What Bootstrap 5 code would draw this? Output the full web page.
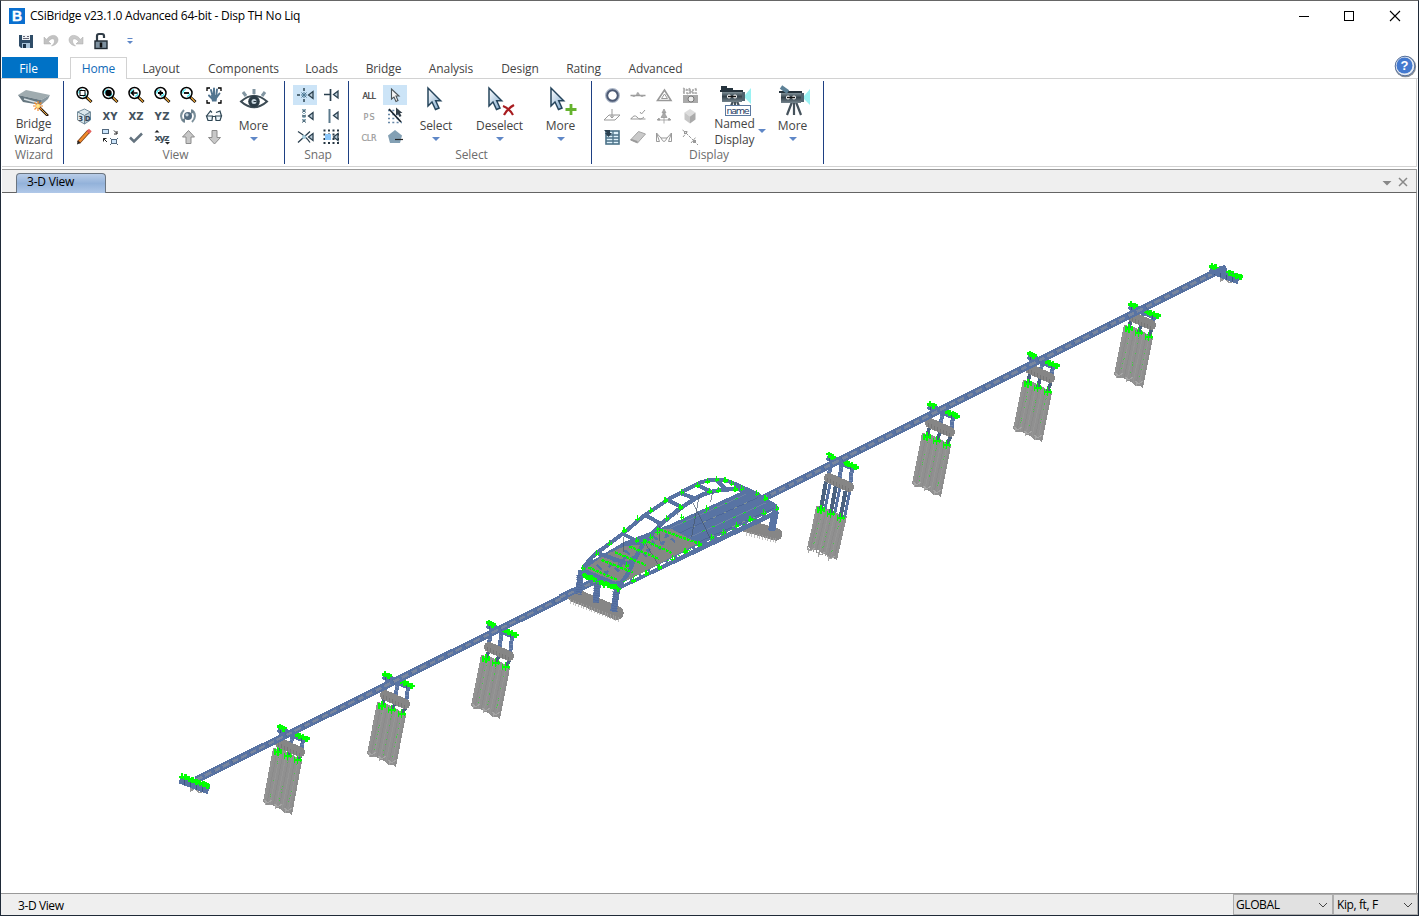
<!DOCTYPE html>
<html lang="en">
<head>
<meta charset="utf-8">
<title>CSiBridge</title>
<link href="https://cdn.jsdelivr.net/npm/bootstrap@5.3.0/dist/css/bootstrap.min.css" rel="stylesheet">
<style>
  html,body{height:100%}
  body{font-family:"Open Sans","Noto Sans",sans-serif;font-size:12px;line-height:16px;color:#444;background:#fff;overflow:hidden;letter-spacing:-.1px}
  .win{height:916px;border:1px solid #1f2a38;border-top-color:#666}
  .titlebar{height:30px;color:#000;padding-left:8px;letter-spacing:-.24px}
  .winbtn{width:45px}
  .quick{height:26px;padding:0 0 7px 15px;gap:5px}
  .tabrow{height:22px;padding-left:1px;border-bottom:1px solid #d2d2d2}
  .tabrow .rtab{text-align:center;padding-top:4px;height:22px;margin-bottom:-1px;line-height:16px}
  .rtab:nth-child(1){width:56px;background:#0072c6;color:#fff;margin-right:12px;height:21px!important;margin-bottom:0!important;padding-right:3px}
  .rtab:nth-child(2){width:57px;background:#fff;border:1px solid #d2d2d2;border-bottom:0;color:#0f6ab8;padding-top:3px!important}
  .rtab:nth-child(3){width:68px}.rtab:nth-child(4){width:97px}.rtab:nth-child(5){width:59px}
  .rtab:nth-child(6){width:65px}.rtab:nth-child(7){width:70px}.rtab:nth-child(8){width:68px}
  .rtab:nth-child(9){width:59px}.rtab:nth-child(10){width:85px}
  .ribbon{height:88px;margin:0 1px 0 1px;border:solid #d2d2d2;border-width:0 1px 1px 0}
  .rgroup{position:relative;height:87px;padding:5px 0 0 7px;margin-right:1px}
  .rgroup::after{content:"";position:absolute;right:-1px;top:2px;width:1px;height:83px;background:#1e4083}
  .rbody{height:63px}
  .glabel{color:#6d6d6d;text-align:center;line-height:16px;margin-left:-4px}
  .icos{display:grid;grid-template-rows:21px 21px 21px;grid-auto-columns:26px;grid-auto-flow:column;align-content:start}
  .icos>span{display:flex;align-items:center;justify-content:center}
  .icos svg{width:20px;height:20px}
  .hot{background:#cce4f7;margin:1px 1px 0;}
  .big{position:relative;display:flex;flex-direction:column;align-items:center;line-height:16px;left:.5px}
  .big>svg{width:32px;height:32px;margin-bottom:2px;flex:none}
  .big.two>svg{margin-bottom:0}
  .big.two{text-align:center}
  .caret{width:0;height:0;border:4px solid transparent;border-top-color:#5f87c7;border-bottom:0;margin-top:3px}
  .caret.side{position:absolute;right:0;top:42px}
  .docbar{height:24px;margin:2px 1px 0;background:#efefef;border:solid #999;border-width:1px 1px 1px 0;border-bottom-color:#646464;padding-left:14px}
  .doctab{width:90px;height:20px;margin-top:3px;border:1px solid #6b7580;border-bottom:0;border-radius:4px 4px 0 0;background:linear-gradient(#b9cde8,#93b2da 50%,#b0c8e8);color:#000;padding-left:10px;line-height:16px;letter-spacing:-.2px}
  .canvas{height:700px;margin:0 1px;border-right:1px solid #999}
  .status{height:22px;background:#efefef;border-top:1px solid #999;color:#000;padding-left:17px;letter-spacing:-.4px}
  .combo{height:21px;background:#e1e1e1;border:1px solid #adadad;padding:0 4px 0 2px;color:#000}
  .t{font-family:"DejaVu Sans","Liberation Sans",sans-serif;letter-spacing:0}
</style>
</head>
<body>
<svg width="0" height="0" class="position-absolute">
  <defs>
    <g id="lens"><path d="M11.500 11.500L17.500 17" stroke="#000" stroke-width="3"/><path d="M13 12.500L17 16.700" stroke="#e9a33a" stroke-width="1.400"/><circle cx="8.500" cy="8" r="5.500" fill="#fff" stroke="#000" stroke-width="1.500"/><path d="M4.800 8.500a4 4 0 0 1 3-4M12 8.500a4 4 0 0 1-3 3" fill="none" stroke="#31e2ee" stroke-width="1.200"/></g>
    <linearGradient id="arr" x1="0" y1="0" x2="1" y2="1"><stop offset="0" stop-color="#fff"/><stop offset="1" stop-color="#7fa9cd"/></linearGradient>
    <linearGradient id="metal" x1="0" y1="0" x2="0" y2="1"><stop offset="0" stop-color="#8fa0a8"/><stop offset=".5" stop-color="#35434c"/><stop offset="1" stop-color="#74838c"/></linearGradient>
    <path id="cur" d="M9 4v18l4-4 3.500 7.500 3.500-1.500-3.300-7.300h5z" fill="url(#arr)" stroke="#26455c" stroke-width="1.500"/>
    <path id="eyeS" d="M17 6.500v7l-4.500-3.500z" fill="#b9cbd8" stroke="#2b404f" stroke-width="1.300"/>
    <g id="cam"><path d="M15 20l-5 13M17 20v13M19 20l5 13" stroke="#45525c" stroke-width="2.200"/><rect x="4" y="10" width="20" height="11" fill="url(#metal)"/><path d="M2 10h23" stroke="#26333c" stroke-width="2"/><circle cx="11" cy="15.500" r="2" fill="#fff"/><circle cx="17" cy="15.500" r="2" fill="#fff"/><path d="M10 15.500h8" stroke="#111" stroke-width="1.500"/><rect x="24" y="11" width="3" height="9" fill="#4f636f"/><path d="M27 14l6-7v16l-6-6z" fill="#9af2f3"/></g>
  </defs>
</svg>
<div class="win d-flex flex-column">
  <div class="titlebar d-flex align-items-center">
    <svg width="16" height="16" viewBox="0 0 16 16" class="me-1"><rect width="16" height="16" fill="#0a6fcf"/><text x="3" y="13" font-family="Liberation Sans" font-weight="700" font-size="14" fill="#fff" stroke="#fff" stroke-width=".4">B</text></svg>
    <span style="padding-left:1px">CSiBridge v23.1.0 Advanced 64-bit - Disp TH No Liq</span>
    <div class="ms-auto d-flex" style="padding-right:1px">
      <svg class="winbtn" height="16"><path d="M17 8.500h10" stroke="#000"/></svg>
      <svg class="winbtn" height="16"><rect x="17.500" y="3.500" width="9" height="9" fill="none" stroke="#000"/></svg>
      <svg class="winbtn" height="16"><path d="M18 3l10 10M28 3L18 13" stroke="#000" stroke-width="1.100"/></svg>
    </div>
  </div>
  <div class="quick d-flex align-items-center">
    <svg width="20" height="20" viewBox="0 0 20 20"><path d="M3 4h14v13H5l-2-2z" fill="#2f4d68"/><rect x="6" y="4" width="8" height="5" fill="#f0f3f5"/><path d="M7 5.500h2m2 0h2M7 7.500h6" stroke="#667"/><rect x="6" y="12" width="8" height="5" fill="#a9c4da"/><rect x="7" y="13" width="3" height="4" fill="#1d3347"/></svg>
    <svg width="20" height="20" viewBox="0 0 20 20"><path d="M3 6v7h7l-2.500-2.500C10 7 13.500 7 13.500 10c0 2-1 3-3 5 5-1 6.500-4 6.500-6.500C16.500 3 9 3 5.500 8.500z" fill="#c2c2c2" stroke="#aaa" stroke-width=".5"/></svg>
    <svg width="20" height="20" viewBox="0 0 20 20"><path d="M17 6v7h-7l2.500-2.500C10 7 6.500 7 6.500 10c0 2 1 3 3 5-5-1-6.500-4-6.500-6.500C3.500 3 11 3 14.500 8.500z" fill="#c9c9c9" stroke="#aaa" stroke-width=".5"/></svg>
    <svg width="20" height="20" viewBox="0 0 20 20"><path d="M6 10V5q0-2 2-2h3q2 0 2 2v2" fill="none" stroke="#303c46" stroke-width="2.200"/><rect x="4" y="10" width="12" height="7.500" fill="#7d909f" stroke="#202a33" stroke-width="1.400"/><path d="M10 11.500v5" stroke="#111" stroke-width="2.500"/></svg>
    <svg width="20" height="20" viewBox="0 0 20 20" style="margin-left:4px"><path d="M7.500 7.500h5" stroke="#5f87c7"/><path d="M7 10h6l-3 3z" fill="#5f87c7"/></svg>
  </div>
  <div class="tabrow d-flex align-items-end position-relative">
    <div class="rtab">File</div><div class="rtab">Home</div><div class="rtab">Layout</div><div class="rtab">Components</div><div class="rtab">Loads</div><div class="rtab">Bridge</div><div class="rtab">Analysis</div><div class="rtab">Design</div><div class="rtab">Rating</div><div class="rtab">Advanced</div>
    <svg width="24" height="24" viewBox="0 0 24 24" class="ms-auto align-self-start" style="margin:-3px 1px 0 0;flex:none"><circle cx="12.500" cy="12.700" r="10.600" fill="#8b9096"/><circle cx="12" cy="12" r="9.800" fill="#e6ebf2" stroke="#5571a0"/><circle cx="11.500" cy="11.500" r="8" fill="#4379cf"/><text x="7.500" y="16" font-family="Liberation Sans" font-weight="700" font-size="13" fill="#fff">?</text></svg>
  </div>
  <div class="ribbon d-flex">
    <div class="rgroup" style="width:61px">
      <div class="rbody"><div class="big two" style="margin-left:-6px"><svg viewBox="0 0 32 32"><path d="M0 11L8 6l24 5-9 5z" fill="#a0acb0"/><path d="M0 11l23 5v5L5 18z" fill="#667780"/><path d="M32 11l-9 5v5l7-6z" fill="#87969e"/><path d="M6 15l14 4" stroke="#d8e1e5" stroke-width="1.500"/><path d="M20 22l10 10" stroke="#2b1b12" stroke-width="2.500"/><path d="M21 23l8 8" stroke="#e7ad42"/><path d="M20 17v10M15 22h10M16.500 18.500l7 7M23.500 18.500l-7 7" stroke="#f18a2a" stroke-width="1.200"/><circle cx="20" cy="22" r="2" fill="#ffe889"/></svg><span>Bridge<br>Wizard</span></div></div>
      <div class="glabel">Wizard</div>
    </div>
    <div class="rgroup" style="width:220px">
      <div class="rbody d-flex">
        <div class="icos">
          <span><svg viewBox="0 0 20 20"><use href="#lens"/><rect x="6" y="5.500" width="5" height="5" fill="#fff" stroke="#000"/></svg></span>
          <span><svg viewBox="0 0 20 20"><g fill="#dbe7ec" stroke="#6b8494" stroke-width=".9"><path d="M3.500 6l7-3 6 3-6 3.500z"/><path d="M3.500 6v8l7 4V9.500z"/><path d="M16.500 6v8l-6 4V9.500z" fill="#b9c9d3"/></g><text x="4.300" y="14.500" class="t" font-size="7" font-weight="700" fill="#345">3</text><text x="10.700" y="14.500" class="t" font-size="7" font-weight="700" fill="#345">D</text></svg></span>
          <span><svg viewBox="0 0 20 20"><path d="M4.500 15.500L15 4" stroke="#743a18" stroke-width="4"/><path d="M5.500 14.500L14 5" stroke="#f18b2a" stroke-width="2.600"/><path d="M14 5.500l2.300-2.500" stroke="#e4605c" stroke-width="3.800"/><path d="M3 17.500l.7-3.800L6.500 16z" fill="#222"/></svg></span>
          <span><svg viewBox="0 0 20 20"><use href="#lens"/><circle cx="8.500" cy="8" r="3.200"/></svg></span>
          <span><svg viewBox="0 0 20 20"><text x="2.500" y="13.500" class="t" font-size="10" font-weight="700" fill="#43525e" textLength="15">XY</text></svg></span>
          <span><svg viewBox="0 0 20 20" fill="none" stroke="#536a80"><rect x="2.500" y="2.500" width="6" height="4" fill="#cce5fb"/><rect x="11.500" y="12.500" width="5" height="4" fill="#cce5fb"/><path d="M10 11l1.500 1.500M18 11l-1.500 1.500M10 18l1.500-1.500M18 18l-1.500-1.500"/><path d="M14 3.500l3 3M17 4v3h-3M7 15l-3.500-3.500M3.500 14.500v-3h3" stroke="#222"/></svg></span>
          <span><svg viewBox="0 0 20 20"><use href="#lens"/><path d="M5.500 8h6M8 5.500L5.500 8 8 10.500" fill="none" stroke="#000" stroke-width="1.500"/></svg></span>
          <span><svg viewBox="0 0 20 20"><text x="2.500" y="13.500" class="t" font-size="10" font-weight="700" fill="#43525e" textLength="15">XZ</text></svg></span>
          <span><svg viewBox="0 0 20 20"><path d="M4 10.500L8 14.500 16 6.500" fill="none" stroke="#64737f" stroke-width="2.500"/></svg></span>
          <span><svg viewBox="0 0 20 20"><use href="#lens"/><path d="M6 8h5M8.500 5.500v5" stroke="#000" stroke-width="1.800"/></svg></span>
          <span><svg viewBox="0 0 20 20"><text x="2.500" y="13.500" class="t" font-size="10" font-weight="700" fill="#43525e" textLength="15">YZ</text></svg></span>
          <span><svg viewBox="0 0 20 20"><text x="2.500" y="13.500" class="t" font-size="9.500" font-weight="700" fill="#43525e" textLength="15">xyz</text><path d="M2.500 5.500h5L5 3zM13 15h5l-2.500 2.500z" fill="#222"/></svg></span>
          <span><svg viewBox="0 0 20 20"><use href="#lens"/><path d="M6 8h5" stroke="#000" stroke-width="1.800"/></svg></span>
          <span><svg viewBox="0 0 20 20"><circle cx="10" cy="10" r="4" fill="#526a7e"/><circle cx="9" cy="8.800" r="1.600" fill="#c3d2dc"/><path d="M6 4q-6 6 0 12M14 4q6 6 0 12" fill="none" stroke="#7d919c" stroke-width="2"/><path d="M3 14l4 3V12zM17 6l-4-3v5z" fill="#6e828e"/></svg></span>
          <span><svg viewBox="0 0 20 20"><path d="M10.500 3.500l6 6.500H13v6.500H8V10H4.500z" fill="#c8c8c8" stroke="#8c8c8c"/></svg></span>
          <span><svg viewBox="0 0 20 20"><path d="M3 6V3h3M14 3h3v3M17 15v3h-3M6 18H3v-3" fill="none" stroke="#000" stroke-width="1.300"/><path d="M5 10.500l3 3M7 5l2 7M10 3.500v8M13 4.500l-1 8M15.500 8.500l-3 4" stroke="#527590" stroke-width="2" stroke-linecap="round"/><path d="M7 10h6.500l-1 6.500H8z" fill="#527590"/></svg></span>
          <span><svg viewBox="0 0 20 20" fill="#edf6fb" stroke="#2f4654" stroke-width="1.200"><path d="M2.500 10h6l-.5 4.500H4zM11.500 10h6L16 14.500h-4zM8.500 10.500h3M2.500 10l4-5 1.500 1.500M17.500 10l-1.500-5-4 1.500" /></svg></span>
          <span><svg viewBox="0 0 20 20"><path d="M10.500 17L4.500 10.500H8V3.500h5v7h3.500z" fill="#c8c8c8" stroke="#8c8c8c"/></svg></span>
        </div>
        <div class="big" style="width:52px"><svg viewBox="0 0 32 32"><path d="M3 17.500Q16 6 29 17.500 16 29 3 17.500z" fill="#fff" stroke="#3c4b54" stroke-width="2"/><circle cx="16" cy="17.500" r="5.800" fill="#2b3b45"/><circle cx="16" cy="17.500" r="2.500" fill="#c3d1da"/><path d="M15.500 17.500h3" stroke="#26333c"/><path d="M16 5v5M5 8l3 4M27 8l-3 4" stroke="#8296a2" stroke-width="3"/></svg><span>More</span><i class="caret"></i></div>
      </div>
      <div class="glabel">View</div>
    </div>
    <div class="rgroup" style="width:63px">
      <div class="rbody">
        <div class="icos">
          <span class="hot"><svg viewBox="0 0 20 20"><path d="M2 10h3M9 3v3M9 14v3" stroke="#2d4453" stroke-width="1.500"/><path d="M6.500 7.500l5 5M11.500 7.500l-5 5M9 7v6M6 10h6" stroke="#4c7894"/><use href="#eyeS" x="1"/></svg></span>
          <span><svg viewBox="0 0 20 20"><path d="M9 3v14" stroke="#4989a5" stroke-width="1.200" stroke-dasharray="1 1"/><path d="M7 3.500l4 3M11 3.500L7 6.500M7 9l4 2M11 9l-4 2M7 13.500l4 3M11 13.500l-4 3" stroke="#466576"/><use href="#eyeS" x="1"/></svg></span>
          <span><svg viewBox="0 0 20 20"><path d="M3 4.500q8 5 12 11M3 15.500L15 4.500" fill="none" stroke="#2b404f" stroke-width="1.300"/><circle cx="9" cy="10" r="2" fill="#a8cfdf"/><use href="#eyeS" x="1"/></svg></span>
          <span><svg viewBox="0 0 20 20"><path d="M3 9.500h6M9.500 4v12" stroke="#2b404f" stroke-width="1.700"/><use href="#eyeS" y="-.5"/></svg></span>
          <span><svg viewBox="0 0 20 20"><path d="M8.500 3v14" stroke="#5c7a8d" stroke-width="2"/><use href="#eyeS" y="-.5"/></svg></span>
          <span><svg viewBox="0 0 20 20"><path d="M2.500 3.500h16M2.500 7.500h16M2.500 12h16M2.500 16h16" stroke="#263643" stroke-width="2" stroke-dasharray="2 2.500"/><rect x="4" y="7" width="6" height="6" fill="#8cc7fa"/><use href="#eyeS"/></svg></span>
        </div>
      </div>
      <div class="glabel">Snap</div>
    </div>
    <div class="rgroup" style="width:242px">
      <div class="rbody d-flex">
        <div class="icos">
          <span><svg viewBox="0 0 20 20"><text x="3.500" y="14" class="t" font-size="8" fill="#333" stroke="#333" stroke-width=".2" textLength="13.500">ALL</text></svg></span>
          <span><svg viewBox="0 0 20 20"><text x="4.500" y="14" class="t" font-size="8" fill="#999" stroke="#999" stroke-width=".2" textLength="11">PS</text></svg></span>
          <span><svg viewBox="0 0 20 20"><text x="2.500" y="14" class="t" font-size="8" fill="#999" stroke="#999" stroke-width=".2" textLength="15">CLR</text></svg></span>
          <span class="hot"><svg viewBox="0 0 20 20"><path d="M6.500 4v10l2.500-2 2 4.500 2-1-2-4.500H14z" fill="#f5f5f5" stroke="#4b5459" stroke-width="1.100"/></svg></span>
          <span><svg viewBox="0 0 20 20"><path d="M3 4.500h12M3 8.500h13M3 12.500h13M3 16.500h14" stroke="#6788a8" stroke-width="1.700" stroke-dasharray="2 2.300"/><path d="M4 3l12 13" stroke="#14212c" stroke-width="1.700"/><path d="M11 1.500v8l2-1.500 1.500 3 2-1-1.500-3h2.500z" fill="#333f48"/></svg></span>
          <span><svg viewBox="0 0 20 20"><path d="M10 3l7 5.500L15 16H5L3 8.500z" fill="#83a0b4"/><path d="M10 12.500h8" stroke="#222" stroke-width="1.200"/></svg></span>
        </div>
        <div class="big" style="width:55px"><svg viewBox="0 0 32 32"><use href="#cur" x="-1"/></svg><span>Select</span><i class="caret"></i></div>
        <div class="big" style="width:72px"><svg viewBox="0 0 32 32"><use href="#cur" x="-4"/><path d="M19 22q6 2 10 9M30 21q-7 4-10 10" fill="none" stroke="#a81c20" stroke-width="2.200"/></svg><span>Deselect</span><i class="caret"></i></div>
        <div class="big" style="width:50px"><svg viewBox="0 0 32 32"><use href="#cur" x="-3"/><path d="M26 20v11M20.500 25.500h11" stroke="#65b32e" stroke-width="2.800"/></svg><span>More</span><i class="caret"></i></div>
      </div>
      <div class="glabel">Select</div>
    </div>
    <div class="rgroup" style="width:231px">
      <div class="rbody d-flex">
        <div class="icos">
          <span><svg viewBox="0 0 20 20"><circle cx="10.500" cy="10.500" r="6" fill="none" stroke="#aeb9c9" stroke-width="3"/><circle cx="10.500" cy="10.500" r="5.300" fill="none" stroke="#4d5a74" stroke-width="2"/></svg></span>
          <span><svg viewBox="0 0 20 20" fill="none" stroke="#999"><path d="M2 14l5-5h11l-5 5zM10 3v9M8 9.500l2 2.500 2-2.500"/></svg></span>
          <span><svg viewBox="0 0 20 20"><rect x="4" y="4" width="13" height="13" fill="#dff2fc" stroke="#4c7288" stroke-width="1.600"/><path d="M11 4v13M4 8h13M4 11h13M4 14h13" stroke="#4c7288" stroke-width="1.300"/><path d="M2 3h6v3h2L6.500 10 3 6h2z" fill="#2b4050"/></svg></span>
          <span><svg viewBox="0 0 20 20"><path d="M2.500 10.500h15" stroke="#999" stroke-width="1.500"/><path d="M4 10.500q1.500 3 4 0zM8 10q1.500-6 4 0zM12 10.500q2 3 4 0z" fill="#aaa"/></svg></span>
          <span><svg viewBox="0 0 20 20" fill="none" stroke="#999"><path d="M2.500 13h15M3 13q3-5 6-2 3 4 7 0M12 6l1.500 2L17 4"/></svg></span>
          <span><svg viewBox="0 0 20 20"><path d="M2.500 13l8-8.500 7 2.500-8 9z" fill="#cacaca" stroke="#a5a5a5"/><path d="M2.500 13l7 3v-2l-6-2z" fill="#999"/></svg></span>
          <span><svg viewBox="0 0 20 20" fill="none" stroke="#999"><path d="M3.500 15.500L10.500 5l6.500 10.500z" stroke-width="1.600"/><path d="M7.500 13.500l3-4.500 3 4.500z"/></svg></span>
          <span><svg viewBox="0 0 20 20" fill="#aaa" stroke="#999" stroke-width=".8"><path d="M10 3l2 4H8zM10 6.500l3 5H7zM10 11v6.500M3 14h3l-1-2zM17 14h-3l1-2zM4 14h12"/></svg></span>
          <span><svg viewBox="0 0 20 20" fill="none" stroke="#999"><path d="M2.500 6v8.500h3L2.500 6l4.500 5h6l4.500-5v8.500h-3l3-8.500M7 11q3 7 6 0" /></svg></span>
          <span><svg viewBox="0 0 20 20"><path d="M3 3l14 6M3 7l8-4M7 9l10-6M3 5h14M3 8h14" stroke="#aaa" stroke-width="1.300" stroke-dasharray="2 1"/><rect x="3" y="10" width="15" height="8" fill="#aaa"/><circle cx="11" cy="14" r="3" fill="#eee" stroke="#777"/></svg></span>
          <span><svg viewBox="0 0 20 20"><path d="M10 3l5.500 3.500-5.500 4-5.500-4z" fill="#ddd"/><path d="M4.500 6.500l5.500 4v7l-5.500-4z" fill="#c7c7c7"/><path d="M15.500 6.500l-5.500 4v7l5.500-4z" fill="#aaa"/></svg></span>
          <span><svg viewBox="0 0 20 20" fill="none" stroke="#999"><path d="M6 6l9 9M3 10l5-6M11 16l5-6M2.500 3l4 3M14 14l4 4" stroke-dasharray="3 1"/><rect x="4.500" y="4.500" width="2" height="2"/><rect x="13.500" y="13.500" width="2" height="2"/></svg></span>
        </div>
        <div class="big two" style="width:62px"><svg viewBox="0 0 32 32" overflow="visible"><g transform="translate(-1 -3)"><use href="#cam"/><path d="M3 5h6v2h6v3H3z" fill="#26343e"/></g><rect x="6.500" y="21.500" width="25" height="10" fill="#fff" stroke="#5b79a0"/><text x="7.500" y="29.500" class="t" font-size="9.500" fill="#1f3d66" textLength="23">name</text></svg><span>Named<br>Display</span><i class="caret side"></i></div>
        <div class="big" style="width:54px"><svg viewBox="0 0 32 32" overflow="visible"><g transform="translate(0 -2)"><use href="#cam"/><path d="M4 5l7 5" stroke="#5c8096" stroke-width="4"/></g></svg><span>More</span><i class="caret"></i></div>
      </div>
      <div class="glabel">Display</div>
    </div>
  </div>
  <div class="docbar d-flex">
    <div class="doctab">3-D View</div>
    <svg class="ms-auto" width="36" height="22"><path d="M2.500 11h9L7 15.500z" fill="#888"/><path d="M19 8l8 8M27 8l-8 8" stroke="#888" stroke-width="1.500"/></svg>
  </div>
  <div class="canvas"><svg id="model" width="1415" height="700" viewBox="2 193 1415 700" shape-rendering="crispEdges" fill="none"></svg></div>
  <div class="status d-flex align-items-center">
    <span style="padding-top:2px">3-D View</span>
    <div class="combo ms-auto d-flex align-items-center justify-content-between" style="width:100px">GLOBAL<svg width="10" height="8"><path d="M1 2l4 4 4-4" fill="none" stroke="#444"/></svg></div>
    <div class="combo d-flex align-items-center justify-content-between" style="width:85px;padding-left:3px">Kip, ft, F<svg width="10" height="8"><path d="M1 2l4 4 4-4" fill="none" stroke="#444"/></svg></div>
  </div>
</div>
<script src="https://cdn.jsdelivr.net/npm/bootstrap@5.3.0/dist/js/bootstrap.bundle.min.js"></script>
<script>
const BLUE='#5873a3', GREY='#868686', GREEN='#00ff00';
let out='', seed=7;
const rnd=()=>(seed=(seed*16807)%2147483647)/2147483647;
const path=(d,c,w,x='')=>{out+=`<path d="${d}" stroke="${c}" stroke-width="${w}" ${x}/>`};
const area=(d,c)=>{out+=`<path d="${d}" fill="${c}"/>`};
// small restraint marker
const tick=(x,y,s=1)=>path(`M${x-2*s} ${y+s}h${4*s}M${x} ${y-3*s}v${6*s}M${x+2*s} ${y-s}v${3*s}`,GREEN,1.4*s);
// green bearing marks following the cap beam between two fractions of its length
function bearings(x,y,a,b,rise=12){
  for(let t=a;t<=b;t+=.13) path(`M${x+28*t-3} ${y+rise*t-1+rnd()*2}h6M${x+28*t} ${y+rise*t-3}v6`,GREEN,2.6);
}
// x,y: left end of cap; g: depth of the footing; px,p: pile group offset; h: pile length
function pier(x,y,g,px,p,h,tall){
  const X=x+px,Y=y+p,w=tall?31:29,dy=tall?10:13;
  area(`M${X} ${Y}l10 2l10 5l${w-20} ${dy-7}l-10 ${h}l-3 -2l-5 0l-3 -4l-5 -1l-3 -3l-7 0l-3 -3z`,'#909090');
  for(let i=0;i<10;i++) path(`M${X+i*3+1} ${Y+2+i*dy/10}l-10 ${h-2}`,i%2?'#8b8b8b':'#959595',1);
  for(let i=0;i<26;i++){const c=i%3,v=rnd();out+=`<rect x="${X+6+c*9-v*9.5}" y="${Y+4+c*4+v*(h-8)}" width="1" height="1" fill="#45c945"/>`}
  for(let i=0;i<3;i++) path(`M${X-9+i*10} ${Y+h-2+i*4}l4 3 4 -3M${X-8+i*10} ${Y+h+i*4}v3`,'#a5a5a5',1);
  for(let i=0;i<3;i++){
    const cx=x+3+i*10.500, cy=y+3+i*4.5, bx=X+5+i*9.8, by=Y+3+i*4;
    path(`M${cx} ${cy}L${cx-2} ${y+g+i*5}`,BLUE,4);
    path(`M${cx} ${cy}L${cx-2} ${y+g+i*5}`,'#7188b0',3,'stroke-dasharray="1 3"');
    path(`M${tall?bx+5:cx-2} ${y+g+5+i*5}L${bx} ${by}`,'#4a6280',tall?4:3.5);
    if(tall)path(`M${bx+9} ${y+g+8+i*4}L${bx+4} ${by}`,BLUE,3);
    path(`M${bx-3} ${by-2}v6M${bx} ${by-4}v9M${bx+3} ${by-2}v5M${bx-3} ${by+1}h7`,GREEN,1.3);
  }
  path(`M${x+1} ${y+g+2}l20 9`,GREY,10,'stroke-linecap="round"');
  for(let i=0;i<8;i++)path(`M${x-1+i*3.1} ${y+g+2+i*1.4}v4`,'#777',1);
  path(`M${x-1} ${y+1}l28 11`,BLUE,6.5);
  path(`M${x+1} ${y}v5M${x+5} ${y+3}v4M${x+22} ${y+9}v5`,'#3f5782',1);
  bearings(x+1,y-1,0,.2);bearings(x,y-1,.6,1);
}
[[1130,305,9,-6,20,50],[1029,355,12,-6,25,49],[929,405,16,-7,28,51],[828,456,20,-12,50,44,1],
 [488,624,21,-7,31,51],[384,675,18,-7,27,52],[279,728,13,-6,20,54]].forEach(a=>pier(...a));
// approach spans
const deck='M196 780L576 591M752 504L1223 268.500';
path(deck,BLUE,7);
path(deck,'#78869f',2.4,'stroke-dasharray="7 3"');
path(deck,'#516b98',6.500,'stroke-dasharray="1 19"');
// abutments
[[180,777],[1210,267]].forEach(([x,y])=>{
  path(`M${x+11} ${y+8}v6l4-3 4 5 5-2v-4`,'#999',1.2);
  path(`M${x} ${y+2}l29 11`,BLUE,9);
  path(`M${x+4} ${y+3}v5M${x+10} ${y+5}v5M${x+16} ${y+8}v5M${x+22} ${y+10}v5`,'#3f5782',1);
  bearings(x+2,y-1,0,.25,10);bearings(x+2,y-1,x<500?.25:.62,1.01,11);
});
path('M1214 273L1226 267',BLUE,5.5);
// arch span, drawn on a grid three times finer than the screen
out+='<g transform="translate(560 465) scale(.33333)">';
path('M550 180L648 208',GREY,38,'stroke-linecap="round"');
for(let i=0;i<12;i++)path(`M${560+i*8} ${198+i*2}v14`,'#a3a3a3',2);
path('M587 140L582 175',BLUE,17);path('M645 140L635 198',BLUE,22);
path('M42 390L170 444',GREY,42,'stroke-linecap="round"');
for(let i=0;i<19;i++)path(`M${32+i*8} ${402+i*3}v15`,'#a3a3a3',2);
path('M0 398L120 341',BLUE,20);path('M0 398L110 348','#7a879d',7,'stroke-dasharray="18 9"');
path('M64 315L55 385M114 350L107 412M172 370L160 440',BLUE,19);
for(let i=0;i<9;i++)path(`M48 ${330+i*7}l18 3M99 ${355+i*7}l18 3M155 ${380+i*7}l18 3`,'#4e689a',2);
area('M66 305L190 232 330 178 540 82 585 78 655 125 655 142 168 378 70 328z',BLUE);
area('M75 312L130 272 195 243 235 240 300 192 335 192 415 235 205 345 165 350z',GREY);
for(let i=0;i<4;i++){const x=330+i*28,y=190+i*14;path(`M${x} ${y}L${x+240} ${y-108}`,i%2?'#4d6798':'#6d82a6',3);path(`M${x+40} ${y-18}L${x+210} ${y-94}`,i%2?'#8fa08f':GREEN,2.500,'stroke-dasharray="9 25"');}
for(let i=0;i<5;i++)path(`M${110+i*42} ${300-i*22}l30 25 12-28 25 22`,BLUE,7,'stroke-dasharray="20 9"');
path('M190 355L410 245','#fff',5,'stroke-dasharray="22 8"');path('M410 245L640 138','#fff',3,'stroke-dasharray="18 15"');
path('M165 375L655 142',BLUE,10);
path('M68 312Q95 270 130 250L190 205 255 150 330 100 410 58Q455 35 510 50L580 82 650 125',BLUE,12);
path('M170 368Q205 335 220 290L250 235 300 180 360 130 410 98Q455 72 535 72L600 90',BLUE,13);
path('M115 265L215 300M185 205L245 235M255 150L305 178M320 103L370 130M362 85L405 100M410 60L450 78M470 45L495 70',BLUE,12);
path('M418 90L395 215M400 115L450 218M250 225L295 300M300 182v45M190 215v45M458 80L452 112M370 125L350 150','#44546a',2);
[[85,307,172,345],[125,285,218,322],[165,262,258,300],[208,244,297,282],[252,225,335,264],[290,190,415,235]].forEach(([a,b,c,d])=>path(`M${a} ${b}L${c} ${d}`,GREEN,7,'stroke-dasharray="9 3"'));
[[68,308],[110,265],[148,235],[192,195],[232,160],[272,135],[315,106],[365,80],[412,60],[442,48],[470,42],[495,45],[515,55],[230,225],[250,230],[292,200],[272,215],[320,158],[360,125],[448,78],[475,75],[525,72],[545,70],[440,128],[365,155],[200,300],[220,345],[258,325],[297,305],[337,280],[375,258],[417,238],[455,215],[490,200],[530,180],[570,162],[610,142],[650,130],[615,100],[590,85]].forEach(([x,y])=>tick(x,y,3));
for(let i=0;i<15;i++)path(`M${74+i*7.2} ${322+i*2.8+rnd()*9}v15m-7 -8h14`,GREEN,i>4&&i<7?2:7);
path('M190 350L650 132',GREEN,2.500,'stroke-dasharray="8 28"');
out+='</g>';
document.getElementById('model').innerHTML=out;
</script>
</body>
</html>
